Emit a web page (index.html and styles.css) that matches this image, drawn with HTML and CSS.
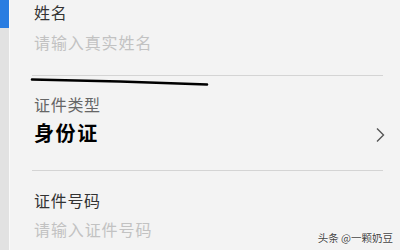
FILE: index.html
```html
<!DOCTYPE html>
<html lang="zh-CN">
<head>
<meta charset="utf-8">
<link rel="stylesheet" href="styles.css">
</head>
<body>
<div class="page">
  <aside class="side"><div class="side-tab"></div></aside>
  <main class="main">
    <div class="form">
      <div class="field field-name">
        <div class="label">姓名</div>
        <div class="placeholder">请输入真实姓名</div>
      </div>
      <div class="field field-type">
        <div class="label label-muted">证件类型</div>
        <div class="value-row">
          <span class="value">身份证</span>
          <svg class="chevron" width="10" height="16" viewBox="0 0 10 16"><path d="M2 1.5 L8.5 8 L2 14.5" fill="none" stroke="#555" stroke-width="1.4"/></svg>
        </div>
      </div>
      <div class="field field-id">
        <div class="label">证件号码</div>
        <div class="placeholder">请输入证件号码</div>
      </div>
    </div>
  </main>
  <svg class="scribble" width="400" height="250" viewBox="0 0 400 250"><path d="M32 79.5 L120 81.5 L207 84.5" fill="none" stroke="#000" stroke-width="2.6" stroke-linecap="round"/></svg>
  <div class="watermark">头条 @一颗奶豆</div>
</div>
</body>
</html>
```
FILE: styles.css
```css
html, body {
  margin: 0;
  padding: 0;
}
body {
  width: 400px;
  height: 250px;
  overflow: hidden;
  background: #f3f3f3;
  font-family: "Noto Sans CJK SC", "Noto Sans", sans-serif;
}
.page {
  position: relative;
  display: flex;
  width: 400px;
  height: 250px;
}
.side {
  width: 9px;
  flex: none;
  background: #e2e2e2;
  border-right: 1px solid #fafafa;
}
.side-tab {
  height: 28px;
  background: #2a7de1;
}
.main {
  flex: 1;
  background: #f3f3f3;
  padding: 0 17px 0 22px;
}
.form {
  display: flex;
  flex-direction: column;
}
.field {
  display: flex;
  flex-direction: column;
  padding-left: 2px;
}
.label {
  font-size: 16px;
  line-height: 22px;
  letter-spacing: 0.7px;
  color: #333;
}
.label-muted {
  color: #666;
}
.placeholder {
  font-size: 16px;
  line-height: 22px;
  letter-spacing: 0.9px;
  color: #c2c2c2;
}
.field-name {
  padding-top: 1px;
  padding-bottom: 22px;
  border-bottom: 1px solid #d4d4d4;
  gap: 8px;
}
.field-type {
  padding-top: 17px;
  padding-bottom: 23px;
  border-bottom: 1px solid #d4d4d4;
  gap: 4px;
}
.field-id {
  padding-top: 18px;
  gap: 7px;
}
.value-row {
  display: flex;
  align-items: center;
  justify-content: space-between;
  height: 28px;
}
.value {
  font-size: 20px;
  line-height: 28px;
  font-weight: 700;
  color: #000;
  letter-spacing: 1.6px;
}
.chevron {
  display: block;
  margin-top: 3px;
  margin-right: -2px;
}
.scribble {
  position: absolute;
  left: 0;
  top: 0;
  pointer-events: none;
}
.watermark {
  position: absolute;
  right: 7px;
  bottom: 5px;
  font-size: 10.5px;
  line-height: 14px;
  color: #444;
  text-shadow: 0 0 2px #fff, 0 0 2px #fff;
}
```
